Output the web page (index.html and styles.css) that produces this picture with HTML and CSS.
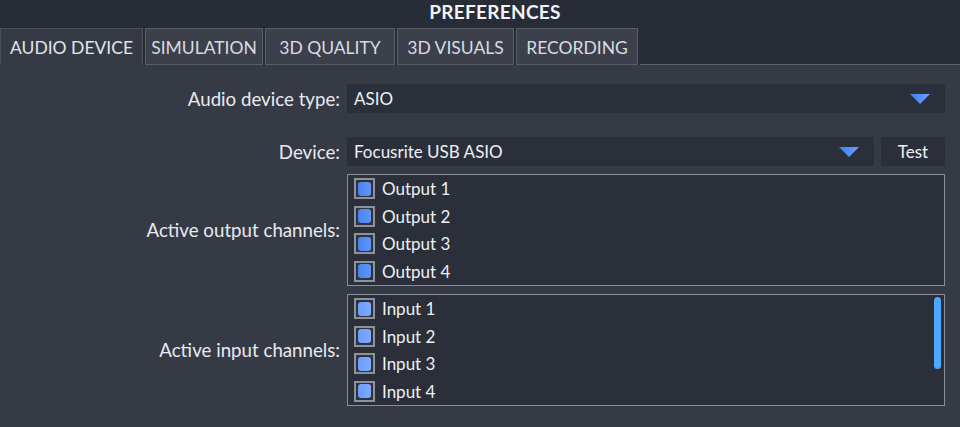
FILE: index.html
```html
<!DOCTYPE html>
<html>
<head>
<meta charset="utf-8">
<link rel="stylesheet" href="styles.css">
</head>
<body>
<div class="window">
  <div class="titlebar"><span class="title">PREFERENCES</span></div>
  <div class="tabs">
    <div class="tab active t1">AUDIO DEVICE</div>
    <div class="tab t2">SIMULATION</div>
    <div class="tab t3">3D QUALITY</div>
    <div class="tab t4">3D VISUALS</div>
    <div class="tab t5">RECORDING</div>
    <div class="tab-fill"></div>
  </div>
  <div class="panel">
    <div class="form">
      <div class="row row-type">
        <div class="label">Audio device type:</div>
        <div class="control">
          <div class="combo">
            <span class="combo-text">ASIO</span>
            <svg class="arrow" width="20" height="10" viewBox="0 0 20 10"><defs><linearGradient id="g1" x1="0" y1="0" x2="1" y2="0"><stop offset="0" stop-color="#3f7ff0"/><stop offset="1" stop-color="#6fa0ff"/></linearGradient></defs><polygon points="0,0 20,0 10,10" fill="url(#g1)"/></svg>
          </div>
        </div>
      </div>
      <div class="row row-device">
        <div class="label">Device:</div>
        <div class="control split">
          <div class="combo grow">
            <span class="combo-text">Focusrite USB ASIO</span>
            <svg class="arrow" width="20" height="10" viewBox="0 0 20 10"><defs><linearGradient id="g2" x1="0" y1="0" x2="1" y2="0"><stop offset="0" stop-color="#3f7ff0"/><stop offset="1" stop-color="#6fa0ff"/></linearGradient></defs><polygon points="0,0 20,0 10,10" fill="url(#g2)"/></svg>
          </div>
          <div class="button">Test</div>
        </div>
      </div>
      <div class="row row-list">
        <div class="label">Active output channels:</div>
        <div class="control">
          <div class="list">
            <div class="item"><span class="check out"></span>Output 1</div>
            <div class="item"><span class="check out"></span>Output 2</div>
            <div class="item"><span class="check out"></span>Output 3</div>
            <div class="item"><span class="check out"></span>Output 4</div>
          </div>
        </div>
      </div>
      <div class="row row-list">
        <div class="label">Active input channels:</div>
        <div class="control">
          <div class="list">
            <div class="item"><span class="check in"></span>Input 1</div>
            <div class="item"><span class="check in"></span>Input 2</div>
            <div class="item"><span class="check in"></span>Input 3</div>
            <div class="item"><span class="check in"></span>Input 4</div>
            <div class="scrollbar"></div>
          </div>
        </div>
      </div>
    </div>
  </div>
</div>
</body>
</html>
```

FILE: styles.css
```css
html, body {
  margin: 0;
  padding: 0;
  background: #353a45;
}
body {
  width: 960px;
  height: 427px;
  overflow: hidden;
  font-family: "Lato", "Noto Sans", sans-serif;
  color: #e6e8ee;
}
.window {
  display: flex;
  flex-direction: column;
  height: 427px;
}
.titlebar {
  height: 28px;
  background: #272c36;
  display: flex;
  align-items: center;
  justify-content: center;
  padding-left: 30px;
}
.title {
  font-size: 19px;
  font-weight: 700;
  color: #f2f3f6;
  letter-spacing: 0.3px;
  margin-top: -5px;
}
.tabs {
  display: flex;
  height: 37px;
  background: #272c36;
}
.tab {
  box-sizing: border-box;
  height: 37px;
  display: flex;
  align-items: center;
  justify-content: center;
  font-size: 17.5px;
  color: #d8dbe2;
  background: #3b404b;
  border: 1px solid #585d68;
  margin-right: 2px;
  padding-top: 1px;
}
.t1 { width: 143px; }
.t2 { width: 118px; }
.t3 { width: 130px; }
.t4 { width: 117px; }
.t5 { width: 122px; }
.tab.active {
  background: #353a45;
  border-color: #4a4f5a;
  border-bottom: none;
  color: #e2e5eb;
}
.tab-fill {
  flex: 1;
  align-self: flex-end;
  height: 36px;
  box-sizing: border-box;
  border-bottom: 1px solid #5d626c;
  background: #272c36;
}
.panel {
  flex: 1;
  background: #353a45;
  padding: 19px 15px 0 0;
}
.form {
  display: flex;
  flex-direction: column;
}
.row {
  display: flex;
  align-items: center;
}
.label {
  width: 340px;
  flex: none;
  text-align: right;
  font-size: 18.7px;
  color: #e8eaef;
  padding-right: 7px;
}
.control {
  flex: 1;
}
.split {
  display: flex;
  gap: 7px;
}
.row-type { margin-bottom: 24px; }
.row-device { margin-bottom: 8px; }
.row-list { margin-bottom: 8px; }
.combo {
  height: 29px;
  background: #2a2f39;
  display: flex;
  align-items: center;
  justify-content: space-between;
  padding: 0 15px 0 7px;
}
.grow { flex: 1; }
.combo-text {
  font-size: 17px;
  color: #eef0f4;
}
.arrow { display: block; }
.button {
  width: 64px;
  height: 29px;
  background: #2a2f39;
  display: flex;
  align-items: center;
  justify-content: center;
  font-size: 17px;
  color: #eef0f4;
}
.list {
  position: relative;
  box-sizing: border-box;
  height: 112px;
  border: 1px solid #8b8f97;
  background: #2a2f39;
}
.item {
  height: 27.5px;
  display: flex;
  align-items: center;
  padding-left: 6px;
  font-size: 17px;
  color: #eef0f4;
}
.check {
  box-sizing: border-box;
  width: 21px;
  height: 21px;
  border: 2px solid #8e929a;
  background: #2e333d;
  margin-right: 7px;
  display: flex;
  align-items: center;
  justify-content: center;
}
.check::after {
  content: "";
  width: 13px;
  height: 14px;
  border-radius: 3px;
}
.check.out::after {
  background: linear-gradient(90deg, #4a82ee, #5f95fa);
}
.check.in::after {
  background: linear-gradient(90deg, #6a9cff, #7fabff);
}
.scrollbar {
  position: absolute;
  right: 3px;
  top: 2px;
  width: 7px;
  height: 72px;
  border-radius: 4px;
  background: #4aa8ff;
}
```
